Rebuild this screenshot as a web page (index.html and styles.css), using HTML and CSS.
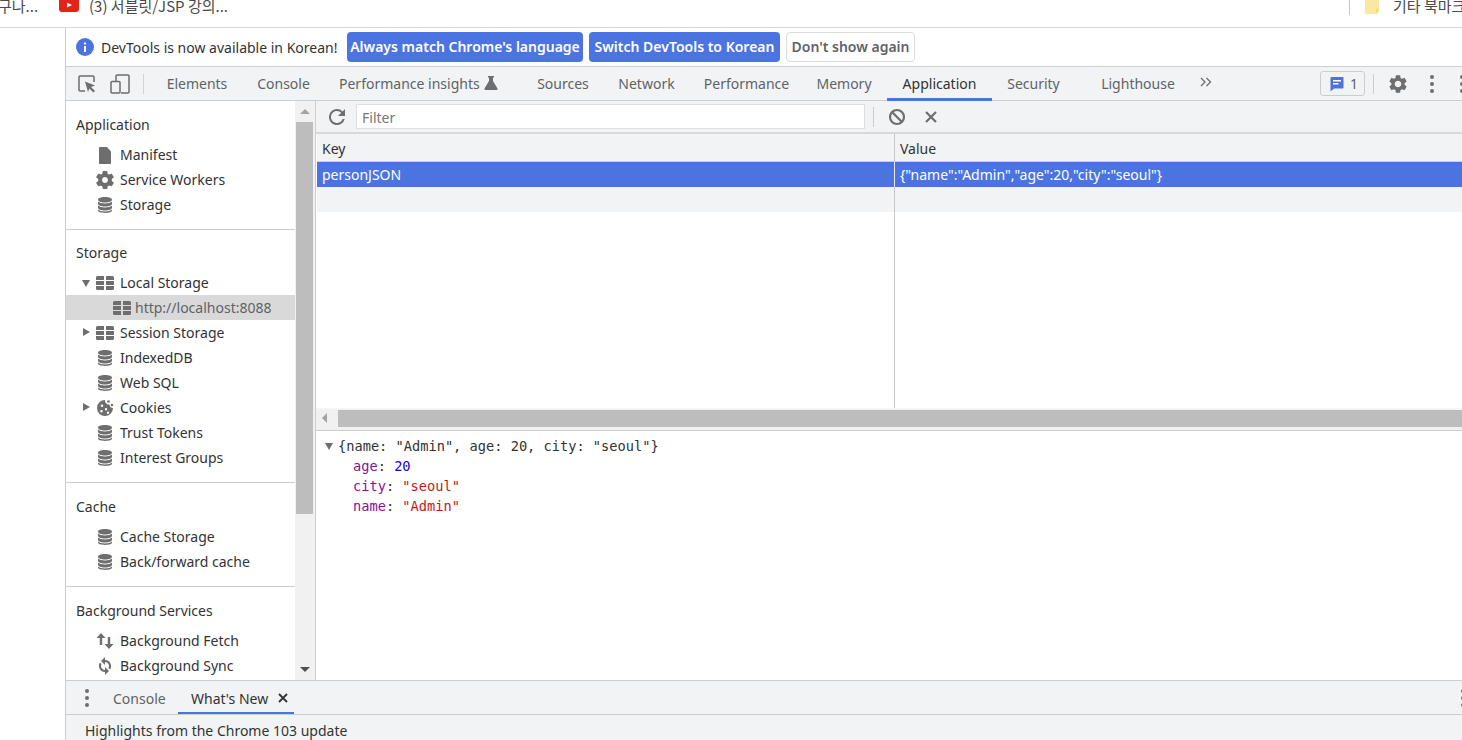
FILE: index.html
```html
<!DOCTYPE html>
<html lang="en">
<head>
<meta charset="utf-8">
<title>DevTools</title>
<link rel="stylesheet" href="styles.css">
</head>
<body>
<svg class="defs" width="0" height="0" aria-hidden="true">
  <symbol id="db" viewBox="0 0 18 18"><path d="M9 1C4.8 1 2 2.1 2 3.7S4.8 6.4 9 6.4s7-1.1 7-2.7S13.2 1 9 1zM2 5.6v2.1c0 1.6 2.8 2.7 7 2.7s7-1.1 7-2.7V5.6c-1.2 1.3-3.8 2-7 2s-5.800-.7-7-2zM2 9.600v2.100c0 1.600 2.800 2.700 7 2.700s7-1.100 7-2.700V9.600c-1.200 1.300-3.800 2-7 2s-5.800-.7-7-2zM2 13.500v1.100C2 16.100 4.800 17 9 17s7-.9 7-2.400v-1.100c-1.200 1.300-3.800 2-7 2s-5.800-.7-7-2z"/></symbol>
  <symbol id="grid" viewBox="0 0 18 14"><path d="M1.500 0H8v4H0V1.500A1.500 1.500 0 0 1 1.500 0zM10 0h6.500A1.500 1.500 0 0 1 18 1.500V4h-8zM0 5h8v4H0zM10 5h8v4h-8zM0 10h8v4H1.500A1.500 1.500 0 0 1 0 12.500zM10 10h8v2.500a1.500 1.500 0 0 1-1.500 1.500H10z"/></symbol>
  <symbol id="gear" viewBox="0 0 24 24"><path d="M19.140 12.940c.04-.3.06-.61.06-.94 0-.32-.02-.64-.07-.94l2.030-1.580c.18-.14.23-.41.12-.61l-1.920-3.320c-.12-.22-.37-.29-.59-.22l-2.390.96c-.5-.38-1.030-.7-1.620-.94l-.36-2.540c-.04-.24-.24-.41-.48-.41h-3.840c-.24 0-.43.17-.47.41l-.36 2.540c-.59.24-1.130.57-1.620.94l-2.390-.96c-.22-.08-.47 0-.59.22L2.740 8.870c-.12.21-.08.47.12.61l2.030 1.580c-.05.3-.09.63-.09.94s.02.64.07.94l-2.030 1.580c-.18.14-.23.41-.12.61l1.920 3.320c.12.22.37.29.59.22l2.390-.96c.5.38 1.030.7 1.620.94l.36 2.540c.05.24.24.41.48.41h3.840c.24 0 .44-.17.47-.41l.36-2.540c.59-.24 1.130-.56 1.620-.94l2.390.96c.22.08.47 0 .59-.22l1.920-3.320c.12-.22.07-.47-.12-.61l-2.010-1.580zM12 15.600c-1.980 0-3.600-1.620-3.600-3.600s1.620-3.600 3.600-3.600 3.600 1.620 3.600 3.600-1.620 3.600-3.600 3.600z"/></symbol>
  <symbol id="gear-tight" viewBox="2.500 2.500 19 19"><path d="M19.140 12.940c.04-.3.06-.61.06-.94 0-.32-.02-.64-.07-.94l2.030-1.580c.18-.14.23-.41.12-.61l-1.920-3.320c-.12-.22-.37-.29-.59-.22l-2.390.96c-.5-.38-1.030-.7-1.620-.94l-.36-2.540c-.04-.24-.24-.41-.48-.41h-3.840c-.24 0-.43.17-.47.41l-.36 2.540c-.59.24-1.130.57-1.620.94l-2.390-.96c-.22-.08-.47 0-.59.22L2.740 8.870c-.12.21-.08.47.12.61l2.030 1.580c-.05.3-.09.63-.09.94s.02.64.07.94l-2.030 1.580c-.18.14-.23.41-.12.61l1.920 3.320c.12.22.37.29.59.22l2.390-.96c.5.38 1.030.7 1.620.94l.36 2.540c.05.24.24.41.48.41h3.840c.24 0 .44-.17.47-.41l.36-2.540c.59-.24 1.130-.56 1.620-.94l2.390.96c.22.08.47 0 .59-.22l1.920-3.320c.12-.22.07-.47-.12-.61l-2.010-1.580zM12 15.100c-1.700 0-3.100-1.400-3.100-3.100s1.400-3.100 3.100-3.100 3.100 1.400 3.100 3.100-1.400 3.100-3.100 3.100z"/></symbol>
  <symbol id="dots" viewBox="0 0 4 18"><circle cx="2" cy="2" r="2"/><circle cx="2" cy="9" r="2"/><circle cx="2" cy="16" r="2"/></symbol>
</svg>

<header class="bookmarks">
  <span class="bm-clipped">구나...</span>
  <svg class="yt" viewBox="0 0 20 14"><rect width="20" height="14" rx="3" fill="#e62117"/><path d="M8 4.500l5 2.500-5 2.500z" fill="#fff"/></svg>
  <span class="bm-text">(3) 서블릿/JSP 강의...</span>
  <span class="bm-sep"></span>
  <svg class="folder" viewBox="0 0 16 16"><path d="M1 0h14v12.500L12.500 15H2a1 1 0 0 1-1-1z" fill="#fbe7a2"/><path d="M15 10h-3v5" fill="#f3d675"/></svg>
  <span class="bm-other">기타 북마크</span>
</header>

<div class="shell">
  <div class="page-gap"></div>
  <main class="devtools">
    <div class="infobar">
      <svg class="info-icon" viewBox="0 0 18 18"><circle cx="9" cy="9" r="9" fill="#4c74e0"/><rect x="8" y="8" width="2" height="6" fill="#fff"/><rect x="8" y="4.500" width="2" height="2" fill="#fff"/></svg>
      <span class="info-text">DevTools is now available in Korean!</span>
      <button class="btn btn-primary btn-match">Always match Chrome's language</button>
      <button class="btn btn-primary btn-switch">Switch DevTools to Korean</button>
      <button class="btn btn-plain">Don't show again</button>
    </div>

    <nav class="tabbar">
      <svg class="tool-icon inspect" viewBox="0 0 18 18"><path d="M7 16H2a1 1 0 0 1-1-1V2a1 1 0 0 1 1-1h13a1 1 0 0 1 1 1v5" fill="none" stroke="#6e6e6e" stroke-width="1.500"/><path d="M7 6.500l10 4-4 1.500 4 4-1.600 1.600-4-4L10 17z" fill="#6e6e6e"/></svg>
      <svg class="tool-icon device" viewBox="0 0 20 20"><path d="M6 7V2a1 1 0 0 1 1-1h11a1 1 0 0 1 1 1v16a1 1 0 0 1-1 1h-7" fill="none" stroke="#6e6e6e" stroke-width="1.500"/><rect x="1" y="7.500" width="9" height="11.500" rx="1" fill="none" stroke="#6e6e6e" stroke-width="1.500"/></svg>
      <span class="tb-sep"></span>
      <a class="tab t-elements">Elements</a>
      <a class="tab t-console">Console</a>
      <a class="tab t-insights">Performance insights
        <svg class="flask" viewBox="0 0 14 14"><path d="M4 0h6v1.500H9V5l4.500 7.500a1 1 0 0 1-.9 1.500H1.400a1 1 0 0 1-.9-1.500L5 5V1.500H4z" fill="#6e6e6e"/></svg>
      </a>
      <a class="tab t-sources">Sources</a>
      <a class="tab t-network">Network</a>
      <a class="tab t-performance">Performance</a>
      <a class="tab t-memory">Memory</a>
      <a class="tab t-application active">Application</a>
      <a class="tab t-security">Security</a>
      <a class="tab t-lighthouse">Lighthouse</a>
      <svg class="more" viewBox="0 0 12 10"><path d="M1 1l4 4-4 4M6.500 1l4 4-4 4" fill="none" stroke="#6e6e6e" stroke-width="1.300"/></svg>
      <span class="issue">
        <svg class="issue-icon" viewBox="0 0 14 16"><path d="M1.500 1h11a1 1 0 0 1 1 1v9.500a1 1 0 0 1-1 1H4L.5 15.500V2a1 1 0 0 1 1-1z" fill="#4c74e0"/><rect x="3" y="4" width="8" height="1.500" fill="#fff"/><rect x="3" y="7" width="5.500" height="1.500" fill="#fff"/></svg>
        <span>1</span>
      </span>
      <span class="tb-sep2"></span>
      <svg class="gear"><use href="#gear"/></svg>
      <svg class="dots"><use href="#dots"/></svg>
      <svg class="dots dots-edge"><use href="#dots"/></svg>
    </nav>

    <div class="workspace">
      <aside class="sidebar">
        <div class="side-content">
          <section class="side-section">
            <h2 class="side-head">Application</h2>
            <div class="row"><span class="arrow"></span><svg class="ic" viewBox="0 0 18 18"><path d="M4 1h7l4 4.500V17a1 1 0 0 1-1 1H4a1 1 0 0 1-1-1V2a1 1 0 0 1 1-1z"/></svg>Manifest</div>
            <div class="row"><span class="arrow"></span><svg class="ic"><use href="#gear-tight"/></svg>Service Workers</div>
            <div class="row"><span class="arrow"></span><svg class="ic"><use href="#db"/></svg>Storage</div>
          </section>
          <section class="side-section">
            <h2 class="side-head">Storage</h2>
            <div class="row"><span class="arrow down"></span><svg class="ic"><use href="#grid"/></svg>Local Storage</div>
            <div class="row row-child selected"><svg class="ic"><use href="#grid"/></svg>http://localhost:8088</div>
            <div class="row"><span class="arrow right"></span><svg class="ic"><use href="#grid"/></svg>Session Storage</div>
            <div class="row"><span class="arrow"></span><svg class="ic"><use href="#db"/></svg>IndexedDB</div>
            <div class="row"><span class="arrow"></span><svg class="ic"><use href="#db"/></svg>Web SQL</div>
            <div class="row"><span class="arrow right"></span><svg class="ic" viewBox="0 0 18 18"><path fill-rule="evenodd" d="M9 1a8 8 0 1 0 8 8 4 4 0 0 1-3.500-3.500A4 4 0 0 1 9 1zM6 5.500a1.300 1.300 0 1 1 0 2.600 1.300 1.300 0 0 1 0-2.600zM5.500 11a1.300 1.300 0 1 1 0 2.600 1.300 1.300 0 0 1 0-2.600zM10 9a1.200 1.200 0 1 1 0 2.400A1.200 1.200 0 0 1 10 9zM12 12.500a1.200 1.200 0 1 1 0 2.400 1.200 1.200 0 0 1 0-2.400z"/><circle cx="12.500" cy="2.500" r="1.300"/><circle cx="16" cy="6" r="1.200"/></svg>Cookies</div>
            <div class="row"><span class="arrow"></span><svg class="ic"><use href="#db"/></svg>Trust Tokens</div>
            <div class="row"><span class="arrow"></span><svg class="ic"><use href="#db"/></svg>Interest Groups</div>
          </section>
          <section class="side-section section-late">
            <h2 class="side-head">Cache</h2>
            <div class="row"><span class="arrow"></span><svg class="ic"><use href="#db"/></svg>Cache Storage</div>
            <div class="row"><span class="arrow"></span><svg class="ic"><use href="#db"/></svg>Back/forward cache</div>
          </section>
          <section class="side-section section-late">
            <h2 class="side-head">Background Services</h2>
            <div class="row"><span class="arrow"></span><svg class="ic" viewBox="0 0 18 18"><path d="M5 1l4.500 5H6.200v7H3.800V6H.5zM13 17l-4.500-5h3.300V5h2.400v7h3.300z"/></svg>Background Fetch</div>
            <div class="row"><span class="arrow"></span><svg class="ic" viewBox="0 0 18 18"><path d="M9 3V0L5 4l4 4V5a4 4 0 0 1 3.500 5.900l1.500 1.500A6 6 0 0 0 9 3zM9 13a4 4 0 0 1-3.500-5.900L4 5.600A6 6 0 0 0 9 15v3l4-4-4-4z"/></svg>Background Sync</div>
          </section>
        </div>
        <div class="vscroll">
          <span class="scroll-up"></span>
          <span class="vthumb"></span>
          <span class="scroll-down"></span>
        </div>
      </aside>

      <div class="panel">
        <div class="storage-toolbar">
          <svg class="refresh" viewBox="0 0 16 16"><path d="M13.600 2.400A7.900 7.900 0 0 0 8 0a8 8 0 1 0 7.700 10h-2.100A6 6 0 1 1 8 2c1.700 0 3.100.7 4.200 1.800L9 7h7V0z" fill="#6e6e6e"/></svg>
          <div class="filter">Filter</div>
          <span class="st-sep"></span>
          <svg class="block" viewBox="0 0 18 18"><circle cx="9" cy="9" r="7" fill="none" stroke="#6e6e6e" stroke-width="2.200"/><path d="M4 4l10 10" stroke="#6e6e6e" stroke-width="2.200"/></svg>
          <svg class="clear" viewBox="0 0 14 14"><path d="M2 2l10 10M12 2L2 12" stroke="#6e6e6e" stroke-width="2.200"/></svg>
        </div>
        <div class="table">
          <div class="t-row t-header"><div class="c-key">Key</div><div class="c-val">Value</div></div>
          <div class="t-row t-selected"><div class="c-key">personJSON</div><div class="c-val">{"name":"Admin","age":20,"city":"seoul"}</div></div>
          <div class="t-row t-empty"><div class="c-key"></div><div class="c-val"></div></div>
          <div class="t-row t-fill"><div class="c-key"></div><div class="c-val"></div></div>
        </div>
        <div class="hscroll"><span class="scroll-left"></span><span class="hthumb"></span></div>
        <div class="preview">
          <div class="p-line p-root"><span class="p-toggle"></span>{name: "Admin", age: 20, city: "seoul"}</div>
          <div class="p-line p-prop"><span class="prop">age</span>: <b class="num">20</b></div>
          <div class="p-line p-prop"><span class="prop">city</span>: <b class="str">"seoul"</b></div>
          <div class="p-line p-prop"><span class="prop">name</span>: <b class="str">"Admin"</b></div>
        </div>
      </div>
    </div>

    <footer class="drawer">
      <div class="drawer-tabs">
        <svg class="dots dots-drawer"><use href="#dots"/></svg>
        <a class="d-tab">Console</a>
        <a class="d-tab d-active">What's New <svg class="d-close" viewBox="0 0 10 10"><path d="M1 1l8 8M9 1L1 9" stroke="#333" stroke-width="1.800"/></svg></a>
        <svg class="dots dots-edge dots-edge-d"><use href="#dots"/></svg>
      </div>
      <div class="drawer-body">Highlights from the Chrome 103 update</div>
    </footer>
  </main>
</div>
</body>
</html>
```
FILE: styles.css
```css
* { box-sizing: border-box; }
html, body { margin: 0; height: 100%; }
body {
  width: 1462px;
  height: 740px;
  overflow: hidden;
  background: #fff;
  font-family: "Noto Sans", "Open Sans", "Noto Sans CJK KR", sans-serif;
  font-size: 14px;
  color: #333;
  display: flex;
  flex-direction: column;
}
.defs { position: absolute; }

/* bookmarks */
.bookmarks {
  height: 28px;
  flex: none;
  border-bottom: 1px solid #d9d9d9;
  overflow: hidden;
  display: flex;
  align-items: center;
  padding-bottom: 17px;
  font-family: "Noto Sans CJK KR", "Noto Sans", sans-serif;
  font-size: 15px;
  color: #4a4a4a;
}
.bm-clipped { width: 61px; margin-left: -2px; flex: none; white-space: nowrap; }
.yt { width: 20px; height: 14px; flex: none; }
.bm-text { margin-left: 10px; width: 141px; flex: none; white-space: nowrap; }
.bm-sep { width: 1px; height: 20px; background: #c8c8c8; margin-left: 1119px; flex: none; }
.folder { width: 16px; height: 16px; margin: 4px 0 0 14px; flex: none; }
.bm-other { margin-left: 13px; white-space: nowrap; }

.shell { flex: 1; min-height: 0; display: flex; }
.page-gap { width: 65px; flex: none; }
.devtools {
  width: 1397px;
  flex: none;
  border-left: 1px solid #cbcdd1;
  display: flex;
  flex-direction: column;
  overflow: hidden;
}

/* info bar */
.infobar {
  height: 39px;
  flex: none;
  border-bottom: 1px solid #cbcdd1;
  display: flex;
  align-items: center;
  padding-left: 10px;
}
.info-icon { width: 18px; height: 18px; flex: none; margin-top: -1px; }
.info-text { margin-left: 7px; width: 238px; white-space: nowrap; flex: none; color: #333; }
.btn {
  height: 30px;
  margin-top: -1px;
  border-radius: 4px;
  font: 600 14px "Noto Sans", sans-serif;
  padding: 0;
  white-space: nowrap;
  flex: none;
}
.btn-primary { background: #4c74e0; color: #fff; border: 0; }
.btn-plain { background: #fff; color: #5f6368; border: 1px solid #dadce0; width: 129px; margin-left: 6px; }
.btn-match { width: 236px; margin-left: 8px; }
.btn-switch { width: 191px; margin-left: 6px; }

/* tabs */
.tabbar {
  height: 34px;
  flex: none;
  background: #f1f3f4;
  border-bottom: 1px solid #cbcdd1;
  display: flex;
  align-items: stretch;
  position: relative;
  color: #5f6368;
}
.tool-icon { flex: none; align-self: center; }
.inspect { width: 18px; height: 18px; margin-left: 12px; }
.device { width: 20px; height: 20px; margin-left: 14px; }
.tb-sep { width: 1px; height: 20px; background: #d0d2d6; align-self: center; margin-left: 13px; flex: none; }
.tab {
  display: flex;
  align-items: center;
  justify-content: center;
  white-space: nowrap;
  flex: none;
  height: 34px;
  padding-bottom: 2px;
}
.t-elements { width: 90px; margin-left: 8px; }
.t-console { width: 83px; }
.t-insights { width: 198px; justify-content: flex-start; padding-left: 14px; }
.flask { width: 14px; height: 14px; margin-left: 4px; flex: none; }
.t-sources { width: 80px; }
.t-network { width: 87px; }
.t-performance { width: 113px; }
.t-memory { width: 86px; margin-left: -2px; }
.t-application { width: 105px; color: #333; border-bottom: 3px solid #4c74e0; padding-top: 1px; padding-bottom: 0; }
.t-security { width: 83px; }
.t-lighthouse { width: 114px; margin-left: 6px; }
.more { width: 12px; height: 10px; align-self: center; margin: -3px 0 0 5px; flex: none; }
.issue {
  margin-left: 108px;
  align-self: center;
  width: 45px;
  height: 25px;
  background: #f1f3f4;
  border: 1px solid #cbcdd1;
  border-radius: 3px;
  display: flex;
  align-items: center;
  gap: 6px;
  padding-left: 9px;
  flex: none;
}
.issue-icon { width: 14px; height: 16px; flex: none; }
.tb-sep2 { width: 1px; height: 20px; background: #cbcdd1; align-self: center; margin-left: 8px; flex: none; }
.gear { width: 22px; height: 22px; align-self: center; margin-left: 13px; fill: #6e6e6e; flex: none; }
.dots { width: 4px; height: 18px; align-self: center; fill: #6e6e6e; flex: none; margin-left: 21px; }
.tabbar .dots-edge { margin-left: 26px; }

/* workspace */
.workspace { flex: none; height: 579px; display: flex; }
.sidebar {
  width: 250px;
  flex: none;
  border-right: 1px solid #cbcdd1;
  display: flex;
  overflow: hidden;
}
.side-content { width: 229px; flex: none; padding-top: 1px; }
.side-section { padding: 9px 0 12px; border-bottom: 1px solid #cbcdd1; }
.section-late { padding-top: 10px; }
.side-head {
  margin: 0 0 6px;
  height: 25px;
  line-height: 27px;
  padding-left: 10px;
  font-weight: 400;
  font-size: 14px;
  color: #333;
}
.row {
  height: 25px;
  display: flex;
  align-items: center;
  padding-left: 16px;
  white-space: nowrap;
  color: #333;
}
.row-child { padding-left: 47px; color: #5f6368; }
.selected { background: #d9d9d9; }
.arrow { width: 10px; height: 10px; flex: none; position: relative; }
.arrow.down::before {
  content: "";
  position: absolute;
  left: 0; top: 2px;
  border-left: 4.500px solid transparent;
  border-right: 4.500px solid transparent;
  border-top: 7px solid #6e6e6e;
}
.arrow.right::before {
  content: "";
  position: absolute;
  left: 1px; top: 0;
  border-top: 4.500px solid transparent;
  border-bottom: 4.500px solid transparent;
  border-left: 7px solid #6e6e6e;
}
.ic { width: 18px; height: 18px; flex: none; fill: #6e6e6e; margin: 0 6px 0 4px; }
.row-child .ic { margin: 0 4px 0 0; }

.vscroll {
  width: 20px;
  flex: none;
  background: #f1f1f1;
  position: relative;
}
.vthumb { position: absolute; left: 1px; top: 21px; width: 17px; height: 392px; background: #bdbdbd; }
.scroll-up, .scroll-down { position: absolute; left: 5px; }
.scroll-up {
  top: 8px;
  border-left: 5px solid transparent;
  border-right: 5px solid transparent;
  border-bottom: 5px solid #a3a3a3;
}
.scroll-down {
  top: 566px;
  border-left: 5px solid transparent;
  border-right: 5px solid transparent;
  border-top: 5px solid #505050;
}

/* panel */
.panel { flex: 1; min-width: 0; display: flex; flex-direction: column; }
.storage-toolbar {
  height: 33px;
  flex: none;
  background: #f1f3f4;
  border-bottom: 2px solid #d6d8db;
  display: flex;
  align-items: center;
}
.refresh { width: 16px; height: 16px; margin-left: 13px; flex: none; }
.filter {
  width: 509px;
  height: 25px;
  margin-left: 11px;
  background: #fff;
  border: 1px solid #dcdee1;
  padding-left: 5px;
  line-height: 25px;
  color: #777;
  flex: none;
}
.st-sep { width: 1px; height: 20px; background: #cbcdd1; margin-left: 8px; flex: none; }
.block { width: 18px; height: 18px; margin-left: 14px; flex: none; }
.clear { width: 14px; height: 14px; margin-left: 18px; flex: none; }

.table { height: 274px; flex: none; display: flex; flex-direction: column; padding-left: 1px; }
.t-row { display: flex; height: 25px; flex: none; line-height: 25px; white-space: nowrap; }
.c-key { width: 578px; flex: none; padding-left: 5px; border-right: 1px solid #c8c8c8; }
.c-val { flex: 1; padding-left: 5px; }
.t-header { height: 28px; line-height: 29px; background: #f1f3f4; border-bottom: 1px solid #cbcdd1; }
.t-selected { background: #4c74e0; color: #fff; }
.t-selected .c-key { border-right-color: #e4e8f5; }
.t-empty { background: #f1f3f4; }
.t-fill { flex: 1; }

.hscroll {
  height: 23px;
  flex: none;
  background: #f1f1f1;
  border-top: 1px solid #f6f6f6;
  border-bottom: 1px solid #cbcdd1;
  position: relative;
}
.scroll-left {
  position: absolute;
  left: 6px; top: 4px;
  border-top: 5px solid transparent;
  border-bottom: 5px solid transparent;
  border-right: 5px solid #a3a3a3;
}
.hthumb { position: absolute; left: 22px; right: 0; top: 1px; height: 17px; background: #bdbdbd; }

.preview {
  flex: 1;
  padding-top: 5px;
  font-family: "DejaVu Sans Mono", "Liberation Mono", monospace;
  font-size: 13.67px;
  line-height: 20px;
  color: #333;
}
.preview b { font-weight: 400; }
.p-line { white-space: pre; height: 20px; }
.p-root { padding-left: 22px; position: relative; }
.p-toggle {
  position: absolute;
  left: 9px; top: 7px;
  border-left: 4.500px solid transparent;
  border-right: 4.500px solid transparent;
  border-top: 7px solid #6e6e6e;
}
.p-prop { padding-left: 37px; }
.prop { color: #881391; }
.str { color: #c41a16; }
.num { color: #1c00cf; }

/* drawer */
.drawer { flex: 1; background: #f1f3f4; display: flex; flex-direction: column; border-top: 1px solid #cbcdd1; min-height: 0; }
.drawer-tabs {
  height: 34px;
  flex: none;
  border-bottom: 1px solid #cbcdd1;
  display: flex;
  align-items: stretch;
  color: #5f6368;
}
.dots-drawer { margin-left: 19px; height: 18px; }
.d-tab { display: flex; align-items: center; white-space: nowrap; flex: none; height: 33px; padding-top: 2px; }
.d-tab:nth-of-type(1) { margin-left: 24px; width: 65px; }
.d-active { width: 116px; padding-left: 13px; border-bottom: 2px solid #4c74e0; padding-top: 4px; color: #333; }
.d-close { width: 10px; height: 10px; margin: -2px 0 0 10px; flex: none; }
.dots-edge-d { margin-left: 1167px; }
.drawer-body { padding: 3px 0 0 19px; line-height: 25px; color: #333; white-space: nowrap; }
```
